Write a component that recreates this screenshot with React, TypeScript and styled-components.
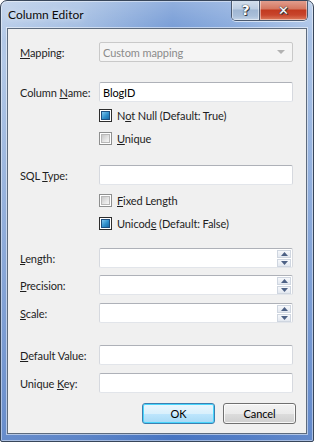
import React, { ReactElement } from 'react';
import styled, { createGlobalStyle } from 'styled-components';

const GlobalStyle = createGlobalStyle`
  html, body {
    margin: 0;
    padding: 0;
    background: #ffffff;
  }
  body {
    font-family: Lato, "Noto Sans", sans-serif;
    font-size: 11px;
    letter-spacing: -0.1px;
  }
`;

const Window = styled.div`
  box-sizing: border-box;
  width: 314px;
  height: 442px;
  border: 1px solid #38465a;
  border-radius: 7px 7px 2px 2px;
  box-shadow: inset 0 0 0 1px rgba(255, 255, 255, 0.45);
  background:
    linear-gradient(180deg, rgba(255, 255, 255, 0.25) 0px, rgba(255, 255, 255, 0) 40px, rgba(40, 90, 180, 0) 60px, rgba(40, 90, 180, 0.55) 100%),
    linear-gradient(90deg, #b3c9e7 0%, #9db9e0 25%, #6d95d3 55%, #85a8dc 78%, #a9c2e6 100%);
  display: flex;
  flex-direction: column;
  overflow: hidden;
`;

const TitleBar = styled.div`
  height: 27px;
  display: flex;
  align-items: flex-start;
  flex-shrink: 0;
`;

const Title = styled.div`
  flex: 1;
  padding: 6px 0 0 7px;
  font-size: 12px;
  letter-spacing: 0;
  line-height: 16px;
  color: #0b0b0b;
  text-shadow: 0 0 6px rgba(255, 255, 255, 0.9);
`;

const CaptionButtons = styled.div`
  display: flex;
  margin-right: 5px;
  margin-top: -1px;
  height: 20px;
  border: 1px solid #4b5a70;
  border-top: none;
  border-radius: 0 0 5px 5px;
  overflow: hidden;
  box-shadow: 0 1px 0 rgba(255, 255, 255, 0.6);
`;

const CaptionButton = styled.div<{ $close?: boolean }>`
  width: ${ p => p.$close ? 47 : 27 }px;
  height: 20px;
  display: flex;
  align-items: center;
  justify-content: center;
  font-family: "DejaVu Sans", sans-serif;
  font-weight: bold;
  font-size: ${ p => p.$close ? 13 : 14 }px;
  color: #ffffff;
  text-shadow: 0 0 1px #30343c, 0 0 1px #30343c, 1px 1px 0 #3a3f48;
  box-shadow: inset 0 0 0 1px rgba(255, 255, 255, 0.45);
  border-left: ${ p => p.$close ? '1px solid #4b5a70' : 'none' };
  background: ${ p => p.$close
    ? 'linear-gradient(180deg, #e3a293 0%, #d4765f 45%, #c2391f 50%, #c8452c 75%, #dd7c5d 100%)'
    : 'linear-gradient(180deg, #d6e1ee 0%, #bccde2 45%, #9fb6d2 50%, #a9bfd9 80%, #c3d3e6 100%)' };
`;

const Client = styled.div`
  flex: 1;
  margin: 0 6px 7px 6px;
  border: 1px solid #5d6b7d;
  box-shadow: 0 0 0 1px rgba(255, 255, 255, 0.5);
  background: #f0f0f0;
  padding: 13px 13px 0 12px;
  display: flex;
  flex-direction: column;
`;

const Row = styled.div<{ $top: number }>`
  display: flex;
  align-items: center;
  margin-top: ${ p => p.$top }px;
  height: 20px;
`;

const Label = styled.div`
  width: 79px;
  flex-shrink: 0;
  color: #1e1e1e;
  white-space: nowrap;
`;

const Field = styled.div<{ $disabled?: boolean }>`
  box-sizing: border-box;
  flex: 1;
  height: 20px;
  display: flex;
  align-items: center;
  padding: 0 1px 0 3px;
  background: ${ p => p.$disabled ? '#f4f4f4' : '#ffffff' };
  border: 1px solid;
  border-color: ${ p => p.$disabled ? '#c9c9c9' : '#aeb1b8 #d6d9df #e2e5ea #d6d9df' };
  border-radius: 2px;
  color: ${ p => p.$disabled ? '#8b8b8b' : '#000000' };
`;

const FieldText = styled.span`
  flex: 1;
`;

const ComboArrow = styled.svg`
  margin-right: 6px;
`;

const Spinner = styled.div`
  display: flex;
  flex-direction: column;
  gap: 1px;
  width: 14px;
`;

const SpinButton = styled.div`
  box-sizing: border-box;
  height: 8px;
  display: flex;
  align-items: center;
  justify-content: center;
  border: 1px solid #cfd6e0;
  background: linear-gradient(180deg, #f6f8fb 0%, #e3e8f0 100%);
`;

const CheckRow = styled.label<{ $top: number }>`
  display: flex;
  align-items: center;
  gap: 5px;
  margin-top: ${ p => p.$top }px;
  margin-left: 79px;
  height: 23px;
  color: #1e1e1e;
`;

const Box = styled.span<{ $checked?: boolean }>`
  box-sizing: border-box;
  width: 13px;
  height: 13px;
  border: 1px solid ${ p => p.$checked ? '#2d2d2d' : '#8e8f8f' };
  padding: 1px;
  background: #ffffff;
  display: flex;
  flex-shrink: 0;

  &::after {
    content: '';
    flex: 1;
    border: 1px solid ${ p => p.$checked ? '#1d4f80' : '#b8b8b8' };
    background: ${ p => p.$checked
      ? 'linear-gradient(135deg, #7fc6ee 0%, #2f8fcb 55%, #1a6aa5 100%)'
      : 'linear-gradient(135deg, #c8c8c8 0%, #e6e6e6 60%, #f6f6f6 100%)' };
  }
`;

const ButtonRow = styled.div`
  display: flex;
  justify-content: flex-end;
  gap: 8px;
  margin-top: 10px;
  margin-right: -3px;
`;

const Button = styled.button<{ $default?: boolean }>`
  box-sizing: border-box;
  width: 73px;
  height: 21px;
  padding: 0;
  font-family: Lato, "Noto Sans", sans-serif;
  font-size: 11px;
  letter-spacing: -0.1px;
  color: #000000;
  border-radius: 3px;
  border: 1px solid ${ p => p.$default ? '#3c7fb1' : '#707070' };
  box-shadow: inset 0 0 0 1px ${ p => p.$default ? '#48d5fc' : 'rgba(255,255,255,0.8)' };
  background: ${ p => p.$default
    ? 'linear-gradient(180deg, #eaf6fd 0%, #d9f0fc 50%, #bee6fd 51%, #a7d9f5 100%)'
    : 'linear-gradient(180deg, #f2f2f2 0%, #ebebeb 50%, #dddddd 51%, #cfcfcf 100%)' };
`;

function Arrow({ up }: { up?: boolean }): ReactElement {
  return (
    <svg width="7" height="4" viewBox="0 0 7 4">
      <path d={ up ? 'M0 4 L3.5 0 L7 4 Z' : 'M0 0 L7 0 L3.5 4 Z' } fill="#4d6185" />
    </svg>
  );
}

function NumberField(): ReactElement {
  return (
    <Field>
      <FieldText />
      <Spinner>
        <SpinButton><Arrow up /></SpinButton>
        <SpinButton><Arrow /></SpinButton>
      </Spinner>
    </Field>
  );
}

export default function App(): ReactElement {
  return (
    <>
      <GlobalStyle />
      <Window>
        <TitleBar>
          <Title>Column Editor</Title>
          <CaptionButtons>
            <CaptionButton>?</CaptionButton>
            <CaptionButton $close>✕</CaptionButton>
          </CaptionButtons>
        </TitleBar>
        <Client>
          <Row $top={ 0 }>
            <Label><u>M</u>apping:</Label>
            <Field $disabled>
              <FieldText>Custom mapping</FieldText>
              <ComboArrow width="8" height="4" viewBox="0 0 8 4">
                <path d="M0 0 L8 0 L4 4 Z" fill="#b2b2b2" />
              </ComboArrow>
            </Field>
          </Row>
          <Row $top={ 20 }>
            <Label>Column <u>N</u>ame:</Label>
            <Field><FieldText>BlogID</FieldText></Field>
          </Row>
          <CheckRow $top={ 2 }><Box $checked /><span>N<u>o</u>t Null (Default: True)</span></CheckRow>
          <CheckRow $top={ 0 }><Box /><span><u>U</u>nique</span></CheckRow>
          <Row $top={ 15 }>
            <Label>SQL <u>T</u>ype:</Label>
            <Field><FieldText /></Field>
          </Row>
          <CheckRow $top={ 4 }><Box /><span><u>F</u>ixed Length</span></CheckRow>
          <CheckRow $top={ 0 }><Box $checked /><span>Unicod<u>e</u> (Default: False)</span></CheckRow>
          <Row $top={ 13 }>
            <Label><u>L</u>ength:</Label>
            <NumberField />
          </Row>
          <Row $top={ 7 }>
            <Label><u>P</u>recision:</Label>
            <NumberField />
          </Row>
          <Row $top={ 8 }>
            <Label><u>S</u>cale:</Label>
            <NumberField />
          </Row>
          <Row $top={ 22 }>
            <Label><u>D</u>efault Value:</Label>
            <Field><FieldText /></Field>
          </Row>
          <Row $top={ 8 }>
            <Label>Unique <u>K</u>ey:</Label>
            <Field><FieldText /></Field>
          </Row>
          <ButtonRow>
            <Button $default>OK</Button>
            <Button>Cancel</Button>
          </ButtonRow>
        </Client>
      </Window>
    </>
  );
}
